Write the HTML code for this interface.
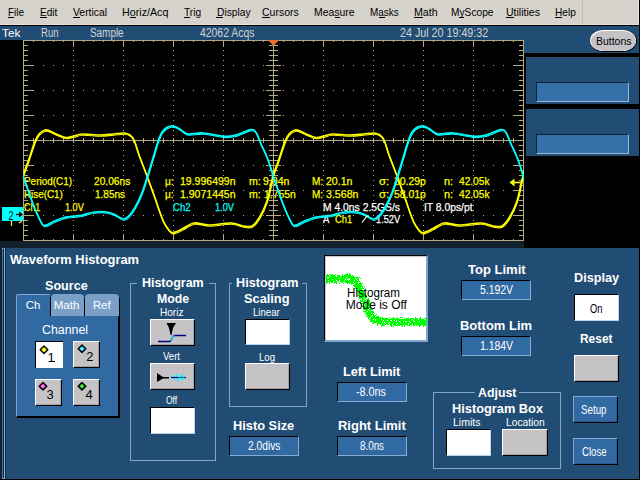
<!DOCTYPE html>
<html><head><meta charset="utf-8">
<style>
*{margin:0;padding:0;box-sizing:border-box}
html,body{width:640px;height:480px;overflow:hidden;background:#000}
body{position:relative;font-family:"Liberation Sans",sans-serif}
.a{position:absolute}
.t{position:absolute;white-space:nowrap;line-height:1;transform-origin:0 0;font-family:"Liberation Sans",sans-serif}
.btn{position:absolute;background:#c6c3c6;border-style:solid;border-width:1px;border-color:#fff #000 #000 #fff;box-shadow:inset -1px -1px 0 #a4a2a4}
.btnw{position:absolute;background:#fff;border-style:solid;border-width:1px;border-color:#000 #b8d0e8 #b8d0e8 #000}
.fld{position:absolute;background:#316aa3;border-style:solid;border-width:1px;border-color:#000 #86acd2 #86acd2 #000}
.grp{position:absolute;border:1px solid #7ea6cf}
.bbtn{position:absolute;background:#316aa3;border-style:solid;border-width:1px;border-color:#7ea6cf #000 #000 #7ea6cf;box-shadow:inset -1px -1px 0 #2a5a8c}
.ul{position:absolute;height:1px;background:#000}
</style></head><body>
<!-- menu bar -->
<div class="a" style="left:0;top:0;width:638px;height:24px;background:#d6d2cc"></div>
<div class="a" style="left:638px;top:0;width:1px;height:25px;background:#e6e2da"></div>
<div class="a" style="left:0;top:24px;width:638px;height:1px;background:#e6e2da"></div>
<div class="a" style="left:582px;top:0;width:1px;height:24px;background:#c0bcb6"></div>
<!-- status bar -->
<div class="a" style="left:0;top:26px;width:639px;height:14px;background:#214d74"></div>
<div class="a" style="left:524px;top:26px;width:115px;height:27px;background:#214d74"></div>
<!-- Buttons pill -->
<div class="a" style="left:590px;top:30px;width:47px;height:22px;border-radius:14px/11px;background:#000"></div>
<div class="a" style="left:590px;top:30px;width:46px;height:21px;border-radius:14px/11px;background:#fff"></div>
<div class="a" style="left:591px;top:31px;width:45px;height:20px;border-radius:13px/10px;background:#c6c3c6"></div>
<!-- right boxes -->
<div class="a" style="left:526px;top:57px;width:113px;height:47px;background:#214d74"></div>
<div class="fld" style="left:536px;top:82px;width:93px;height:20px;background:#3570a8;border-color:#10223a #9ab8d6 #9ab8d6 #10223a"></div>
<div class="a" style="left:526px;top:109px;width:113px;height:47px;background:#214d74"></div>
<div class="fld" style="left:536px;top:134px;width:93px;height:20px;background:#3570a8;border-color:#10223a #9ab8d6 #9ab8d6 #10223a"></div>
<!-- dark band -->
<div class="a" style="left:0;top:241px;width:524px;height:7px;background:#13202e"></div>
<!-- bottom panel -->
<div class="a" style="left:0;top:248px;width:2px;height:231px;background:#13202e"></div>
<div class="a" style="left:2px;top:248px;width:637px;height:231px;background:#214d74"></div>
<div class="a" style="left:2px;top:248px;width:3px;height:231px;background:#10203a;border-style:solid;border-width:1px 1px 1px 1px;border-color:#6a9cd0 #8cb0d8 #8cb0d8 #3c78c0"></div>
<div class="a" style="left:5px;top:248px;width:1px;height:231px;background:#14283c"></div>
<!-- scope svg -->
<svg class="a" style="left:0;top:0;z-index:5" width="640" height="480" viewBox="0 0 640 480">
<rect x="23.5" y="40.5" width="500" height="200" fill="none" stroke="#b4aa82" stroke-width="1"/>
<line x1="23" y1="140.5" x2="524" y2="140.5" stroke="#b4aa82"/>
<line x1="273.5" y1="40" x2="273.5" y2="241" stroke="#b4aa82"/>
<rect x="123" y="210" width="1" height="1" fill="#b4aa82"/>
<rect x="203" y="90" width="1" height="1" fill="#b4aa82"/>
<rect x="323" y="155" width="1" height="1" fill="#b4aa82"/>
<rect x="473" y="170" width="1" height="1" fill="#b4aa82"/>
<rect x="123" y="75" width="1" height="1" fill="#b4aa82"/>
<rect x="313" y="65" width="1" height="1" fill="#b4aa82"/>
<rect x="223" y="180" width="1" height="1" fill="#b4aa82"/>
<rect x="423" y="205" width="1" height="1" fill="#b4aa82"/>
<rect x="173" y="170" width="1" height="1" fill="#b4aa82"/>
<rect x="453" y="215" width="1" height="1" fill="#b4aa82"/>
<rect x="113" y="165" width="1" height="1" fill="#b4aa82"/>
<rect x="373" y="115" width="1" height="1" fill="#b4aa82"/>
<rect x="73" y="110" width="1" height="1" fill="#b4aa82"/>
<rect x="143" y="165" width="1" height="1" fill="#b4aa82"/>
<rect x="223" y="45" width="1" height="1" fill="#b4aa82"/>
<rect x="423" y="70" width="1" height="1" fill="#b4aa82"/>
<rect x="503" y="90" width="1" height="1" fill="#b4aa82"/>
<rect x="123" y="205" width="1" height="1" fill="#b4aa82"/>
<rect x="73" y="195" width="1" height="1" fill="#b4aa82"/>
<rect x="323" y="150" width="1" height="1" fill="#b4aa82"/>
<rect x="343" y="65" width="1" height="1" fill="#b4aa82"/>
<rect x="473" y="165" width="1" height="1" fill="#b4aa82"/>
<rect x="283" y="190" width="1" height="1" fill="#b4aa82"/>
<rect x="483" y="215" width="1" height="1" fill="#b4aa82"/>
<rect x="43" y="190" width="1" height="1" fill="#b4aa82"/>
<rect x="323" y="235" width="1" height="1" fill="#b4aa82"/>
<rect x="123" y="70" width="1" height="1" fill="#b4aa82"/>
<rect x="403" y="115" width="1" height="1" fill="#b4aa82"/>
<rect x="73" y="60" width="1" height="1" fill="#b4aa82"/>
<rect x="223" y="175" width="1" height="1" fill="#b4aa82"/>
<rect x="423" y="200" width="1" height="1" fill="#b4aa82"/>
<rect x="413" y="165" width="1" height="1" fill="#b4aa82"/>
<rect x="173" y="165" width="1" height="1" fill="#b4aa82"/>
<rect x="93" y="65" width="1" height="1" fill="#b4aa82"/>
<rect x="373" y="110" width="1" height="1" fill="#b4aa82"/>
<rect x="293" y="90" width="1" height="1" fill="#b4aa82"/>
<rect x="323" y="100" width="1" height="1" fill="#b4aa82"/>
<rect x="183" y="215" width="1" height="1" fill="#b4aa82"/>
<rect x="103" y="115" width="1" height="1" fill="#b4aa82"/>
<rect x="423" y="65" width="1" height="1" fill="#b4aa82"/>
<rect x="123" y="200" width="1" height="1" fill="#b4aa82"/>
<rect x="313" y="190" width="1" height="1" fill="#b4aa82"/>
<rect x="513" y="215" width="1" height="1" fill="#b4aa82"/>
<rect x="73" y="190" width="1" height="1" fill="#b4aa82"/>
<rect x="233" y="90" width="1" height="1" fill="#b4aa82"/>
<rect x="433" y="115" width="1" height="1" fill="#b4aa82"/>
<rect x="473" y="160" width="1" height="1" fill="#b4aa82"/>
<rect x="443" y="165" width="1" height="1" fill="#b4aa82"/>
<rect x="203" y="165" width="1" height="1" fill="#b4aa82"/>
<rect x="363" y="65" width="1" height="1" fill="#b4aa82"/>
<rect x="323" y="230" width="1" height="1" fill="#b4aa82"/>
<rect x="123" y="65" width="1" height="1" fill="#b4aa82"/>
<rect x="73" y="55" width="1" height="1" fill="#b4aa82"/>
<rect x="213" y="215" width="1" height="1" fill="#b4aa82"/>
<rect x="223" y="170" width="1" height="1" fill="#b4aa82"/>
<rect x="423" y="195" width="1" height="1" fill="#b4aa82"/>
<rect x="133" y="115" width="1" height="1" fill="#b4aa82"/>
<rect x="503" y="215" width="1" height="1" fill="#b4aa82"/>
<rect x="173" y="160" width="1" height="1" fill="#b4aa82"/>
<rect x="373" y="105" width="1" height="1" fill="#b4aa82"/>
<rect x="343" y="190" width="1" height="1" fill="#b4aa82"/>
<rect x="323" y="95" width="1" height="1" fill="#b4aa82"/>
<rect x="263" y="90" width="1" height="1" fill="#b4aa82"/>
<rect x="423" y="60" width="1" height="1" fill="#b4aa82"/>
<rect x="123" y="195" width="1" height="1" fill="#b4aa82"/>
<rect x="393" y="65" width="1" height="1" fill="#b4aa82"/>
<rect x="73" y="185" width="1" height="1" fill="#b4aa82"/>
<rect x="153" y="65" width="1" height="1" fill="#b4aa82"/>
<rect x="473" y="155" width="1" height="1" fill="#b4aa82"/>
<rect x="223" y="120" width="1" height="1" fill="#b4aa82"/>
<rect x="503" y="165" width="1" height="1" fill="#b4aa82"/>
<rect x="163" y="115" width="1" height="1" fill="#b4aa82"/>
<rect x="93" y="190" width="1" height="1" fill="#b4aa82"/>
<rect x="373" y="235" width="1" height="1" fill="#b4aa82"/>
<rect x="293" y="215" width="1" height="1" fill="#b4aa82"/>
<rect x="323" y="225" width="1" height="1" fill="#b4aa82"/>
<rect x="123" y="60" width="1" height="1" fill="#b4aa82"/>
<rect x="73" y="50" width="1" height="1" fill="#b4aa82"/>
<rect x="193" y="115" width="1" height="1" fill="#b4aa82"/>
<rect x="423" y="190" width="1" height="1" fill="#b4aa82"/>
<rect x="173" y="155" width="1" height="1" fill="#b4aa82"/>
<rect x="373" y="100" width="1" height="1" fill="#b4aa82"/>
<rect x="233" y="215" width="1" height="1" fill="#b4aa82"/>
<rect x="323" y="90" width="1" height="1" fill="#b4aa82"/>
<rect x="423" y="55" width="1" height="1" fill="#b4aa82"/>
<rect x="123" y="190" width="1" height="1" fill="#b4aa82"/>
<rect x="453" y="65" width="1" height="1" fill="#b4aa82"/>
<rect x="73" y="180" width="1" height="1" fill="#b4aa82"/>
<rect x="473" y="150" width="1" height="1" fill="#b4aa82"/>
<rect x="463" y="115" width="1" height="1" fill="#b4aa82"/>
<rect x="223" y="115" width="1" height="1" fill="#b4aa82"/>
<rect x="423" y="140" width="1" height="1" fill="#b4aa82"/>
<rect x="373" y="230" width="1" height="1" fill="#b4aa82"/>
<rect x="323" y="220" width="1" height="1" fill="#b4aa82"/>
<rect x="123" y="55" width="1" height="1" fill="#b4aa82"/>
<rect x="233" y="165" width="1" height="1" fill="#b4aa82"/>
<rect x="263" y="215" width="1" height="1" fill="#b4aa82"/>
<rect x="73" y="45" width="1" height="1" fill="#b4aa82"/>
<rect x="353" y="90" width="1" height="1" fill="#b4aa82"/>
<rect x="173" y="150" width="1" height="1" fill="#b4aa82"/>
<rect x="123" y="140" width="1" height="1" fill="#b4aa82"/>
<rect x="373" y="95" width="1" height="1" fill="#b4aa82"/>
<rect x="153" y="190" width="1" height="1" fill="#b4aa82"/>
<rect x="483" y="65" width="1" height="1" fill="#b4aa82"/>
<rect x="323" y="85" width="1" height="1" fill="#b4aa82"/>
<rect x="243" y="65" width="1" height="1" fill="#b4aa82"/>
<rect x="493" y="115" width="1" height="1" fill="#b4aa82"/>
<rect x="53" y="90" width="1" height="1" fill="#b4aa82"/>
<rect x="253" y="115" width="1" height="1" fill="#b4aa82"/>
<rect x="373" y="180" width="1" height="1" fill="#b4aa82"/>
<rect x="73" y="175" width="1" height="1" fill="#b4aa82"/>
<rect x="263" y="165" width="1" height="1" fill="#b4aa82"/>
<rect x="473" y="145" width="1" height="1" fill="#b4aa82"/>
<rect x="183" y="65" width="1" height="1" fill="#b4aa82"/>
<rect x="383" y="90" width="1" height="1" fill="#b4aa82"/>
<rect x="223" y="110" width="1" height="1" fill="#b4aa82"/>
<rect x="423" y="135" width="1" height="1" fill="#b4aa82"/>
<rect x="323" y="215" width="1" height="1" fill="#b4aa82"/>
<rect x="373" y="45" width="1" height="1" fill="#b4aa82"/>
<rect x="513" y="65" width="1" height="1" fill="#b4aa82"/>
<rect x="173" y="145" width="1" height="1" fill="#b4aa82"/>
<rect x="83" y="90" width="1" height="1" fill="#b4aa82"/>
<rect x="453" y="190" width="1" height="1" fill="#b4aa82"/>
<rect x="123" y="135" width="1" height="1" fill="#b4aa82"/>
<rect x="323" y="80" width="1" height="1" fill="#b4aa82"/>
<rect x="213" y="65" width="1" height="1" fill="#b4aa82"/>
<rect x="373" y="175" width="1" height="1" fill="#b4aa82"/>
<rect x="73" y="170" width="1" height="1" fill="#b4aa82"/>
<rect x="353" y="215" width="1" height="1" fill="#b4aa82"/>
<rect x="273" y="115" width="1" height="1" fill="#b4aa82"/>
<rect x="473" y="140" width="1" height="1" fill="#b4aa82"/>
<rect x="223" y="105" width="1" height="1" fill="#b4aa82"/>
<rect x="423" y="130" width="1" height="1" fill="#b4aa82"/>
<rect x="283" y="165" width="1" height="1" fill="#b4aa82"/>
<rect x="113" y="90" width="1" height="1" fill="#b4aa82"/>
<rect x="483" y="190" width="1" height="1" fill="#b4aa82"/>
<rect x="43" y="165" width="1" height="1" fill="#b4aa82"/>
<rect x="323" y="210" width="1" height="1" fill="#b4aa82"/>
<rect x="243" y="190" width="1" height="1" fill="#b4aa82"/>
<rect x="53" y="215" width="1" height="1" fill="#b4aa82"/>
<rect x="173" y="140" width="1" height="1" fill="#b4aa82"/>
<rect x="123" y="130" width="1" height="1" fill="#b4aa82"/>
<rect x="323" y="75" width="1" height="1" fill="#b4aa82"/>
<rect x="183" y="190" width="1" height="1" fill="#b4aa82"/>
<rect x="383" y="215" width="1" height="1" fill="#b4aa82"/>
<rect x="223" y="235" width="1" height="1" fill="#b4aa82"/>
<rect x="273" y="65" width="1" height="1" fill="#b4aa82"/>
<rect x="303" y="115" width="1" height="1" fill="#b4aa82"/>
<rect x="373" y="170" width="1" height="1" fill="#b4aa82"/>
<rect x="313" y="165" width="1" height="1" fill="#b4aa82"/>
<rect x="513" y="190" width="1" height="1" fill="#b4aa82"/>
<rect x="73" y="165" width="1" height="1" fill="#b4aa82"/>
<rect x="473" y="135" width="1" height="1" fill="#b4aa82"/>
<rect x="223" y="100" width="1" height="1" fill="#b4aa82"/>
<rect x="423" y="125" width="1" height="1" fill="#b4aa82"/>
<rect x="413" y="90" width="1" height="1" fill="#b4aa82"/>
<rect x="83" y="215" width="1" height="1" fill="#b4aa82"/>
<rect x="323" y="205" width="1" height="1" fill="#b4aa82"/>
<rect x="473" y="220" width="1" height="1" fill="#b4aa82"/>
<rect x="213" y="190" width="1" height="1" fill="#b4aa82"/>
<rect x="303" y="65" width="1" height="1" fill="#b4aa82"/>
<rect x="173" y="135" width="1" height="1" fill="#b4aa82"/>
<rect x="123" y="125" width="1" height="1" fill="#b4aa82"/>
<rect x="313" y="115" width="1" height="1" fill="#b4aa82"/>
<rect x="343" y="165" width="1" height="1" fill="#b4aa82"/>
<rect x="323" y="70" width="1" height="1" fill="#b4aa82"/>
<rect x="223" y="230" width="1" height="1" fill="#b4aa82"/>
<rect x="473" y="85" width="1" height="1" fill="#b4aa82"/>
<rect x="173" y="220" width="1" height="1" fill="#b4aa82"/>
<rect x="113" y="215" width="1" height="1" fill="#b4aa82"/>
<rect x="443" y="90" width="1" height="1" fill="#b4aa82"/>
<rect x="373" y="165" width="1" height="1" fill="#b4aa82"/>
<rect x="73" y="160" width="1" height="1" fill="#b4aa82"/>
<rect x="143" y="215" width="1" height="1" fill="#b4aa82"/>
<rect x="223" y="95" width="1" height="1" fill="#b4aa82"/>
<rect x="423" y="120" width="1" height="1" fill="#b4aa82"/>
<rect x="333" y="65" width="1" height="1" fill="#b4aa82"/>
<rect x="173" y="85" width="1" height="1" fill="#b4aa82"/>
<rect x="323" y="200" width="1" height="1" fill="#b4aa82"/>
<rect x="343" y="115" width="1" height="1" fill="#b4aa82"/>
<rect x="273" y="190" width="1" height="1" fill="#b4aa82"/>
<rect x="473" y="215" width="1" height="1" fill="#b4aa82"/>
<rect x="193" y="90" width="1" height="1" fill="#b4aa82"/>
<rect x="123" y="120" width="1" height="1" fill="#b4aa82"/>
<rect x="33" y="65" width="1" height="1" fill="#b4aa82"/>
<rect x="403" y="165" width="1" height="1" fill="#b4aa82"/>
<rect x="323" y="65" width="1" height="1" fill="#b4aa82"/>
<rect x="223" y="225" width="1" height="1" fill="#b4aa82"/>
<rect x="473" y="80" width="1" height="1" fill="#b4aa82"/>
<rect x="413" y="215" width="1" height="1" fill="#b4aa82"/>
<rect x="173" y="215" width="1" height="1" fill="#b4aa82"/>
<rect x="93" y="115" width="1" height="1" fill="#b4aa82"/>
<rect x="373" y="160" width="1" height="1" fill="#b4aa82"/>
<rect x="73" y="155" width="1" height="1" fill="#b4aa82"/>
<rect x="103" y="165" width="1" height="1" fill="#b4aa82"/>
<rect x="303" y="190" width="1" height="1" fill="#b4aa82"/>
<rect x="463" y="90" width="1" height="1" fill="#b4aa82"/>
<rect x="223" y="90" width="1" height="1" fill="#b4aa82"/>
<rect x="423" y="115" width="1" height="1" fill="#b4aa82"/>
<rect x="173" y="80" width="1" height="1" fill="#b4aa82"/>
<rect x="323" y="195" width="1" height="1" fill="#b4aa82"/>
<rect x="63" y="65" width="1" height="1" fill="#b4aa82"/>
<rect x="433" y="165" width="1" height="1" fill="#b4aa82"/>
<rect x="473" y="210" width="1" height="1" fill="#b4aa82"/>
<rect x="353" y="65" width="1" height="1" fill="#b4aa82"/>
<rect x="443" y="215" width="1" height="1" fill="#b4aa82"/>
<rect x="203" y="215" width="1" height="1" fill="#b4aa82"/>
<rect x="363" y="115" width="1" height="1" fill="#b4aa82"/>
<rect x="123" y="115" width="1" height="1" fill="#b4aa82"/>
<rect x="73" y="105" width="1" height="1" fill="#b4aa82"/>
<rect x="323" y="60" width="1" height="1" fill="#b4aa82"/>
<rect x="223" y="220" width="1" height="1" fill="#b4aa82"/>
<rect x="133" y="165" width="1" height="1" fill="#b4aa82"/>
<rect x="473" y="75" width="1" height="1" fill="#b4aa82"/>
<rect x="333" y="190" width="1" height="1" fill="#b4aa82"/>
<rect x="493" y="90" width="1" height="1" fill="#b4aa82"/>
<rect x="173" y="210" width="1" height="1" fill="#b4aa82"/>
<rect x="53" y="65" width="1" height="1" fill="#b4aa82"/>
<rect x="253" y="90" width="1" height="1" fill="#b4aa82"/>
<rect x="373" y="155" width="1" height="1" fill="#b4aa82"/>
<rect x="323" y="145" width="1" height="1" fill="#b4aa82"/>
<rect x="193" y="215" width="1" height="1" fill="#b4aa82"/>
<rect x="383" y="65" width="1" height="1" fill="#b4aa82"/>
<rect x="223" y="85" width="1" height="1" fill="#b4aa82"/>
<rect x="423" y="110" width="1" height="1" fill="#b4aa82"/>
<rect x="173" y="75" width="1" height="1" fill="#b4aa82"/>
<rect x="33" y="190" width="1" height="1" fill="#b4aa82"/>
<rect x="393" y="115" width="1" height="1" fill="#b4aa82"/>
<rect x="73" y="235" width="1" height="1" fill="#b4aa82"/>
<rect x="153" y="115" width="1" height="1" fill="#b4aa82"/>
<rect x="473" y="205" width="1" height="1" fill="#b4aa82"/>
<rect x="163" y="165" width="1" height="1" fill="#b4aa82"/>
<rect x="83" y="65" width="1" height="1" fill="#b4aa82"/>
<rect x="123" y="110" width="1" height="1" fill="#b4aa82"/>
<rect x="73" y="100" width="1" height="1" fill="#b4aa82"/>
<rect x="193" y="165" width="1" height="1" fill="#b4aa82"/>
<rect x="223" y="215" width="1" height="1" fill="#b4aa82"/>
<rect x="473" y="70" width="1" height="1" fill="#b4aa82"/>
<rect x="83" y="165" width="1" height="1" fill="#b4aa82"/>
<rect x="173" y="205" width="1" height="1" fill="#b4aa82"/>
<rect x="373" y="150" width="1" height="1" fill="#b4aa82"/>
<rect x="63" y="190" width="1" height="1" fill="#b4aa82"/>
<rect x="323" y="140" width="1" height="1" fill="#b4aa82"/>
<rect x="223" y="80" width="1" height="1" fill="#b4aa82"/>
<rect x="423" y="105" width="1" height="1" fill="#b4aa82"/>
<rect x="173" y="70" width="1" height="1" fill="#b4aa82"/>
<rect x="453" y="115" width="1" height="1" fill="#b4aa82"/>
<rect x="113" y="65" width="1" height="1" fill="#b4aa82"/>
<rect x="73" y="230" width="1" height="1" fill="#b4aa82"/>
<rect x="473" y="200" width="1" height="1" fill="#b4aa82"/>
<rect x="463" y="165" width="1" height="1" fill="#b4aa82"/>
<rect x="223" y="165" width="1" height="1" fill="#b4aa82"/>
<rect x="253" y="215" width="1" height="1" fill="#b4aa82"/>
<rect x="143" y="65" width="1" height="1" fill="#b4aa82"/>
<rect x="123" y="105" width="1" height="1" fill="#b4aa82"/>
<rect x="73" y="95" width="1" height="1" fill="#b4aa82"/>
<rect x="423" y="235" width="1" height="1" fill="#b4aa82"/>
<rect x="473" y="65" width="1" height="1" fill="#b4aa82"/>
<rect x="173" y="200" width="1" height="1" fill="#b4aa82"/>
<rect x="363" y="190" width="1" height="1" fill="#b4aa82"/>
<rect x="373" y="145" width="1" height="1" fill="#b4aa82"/>
<rect x="283" y="90" width="1" height="1" fill="#b4aa82"/>
<rect x="483" y="115" width="1" height="1" fill="#b4aa82"/>
<rect x="43" y="90" width="1" height="1" fill="#b4aa82"/>
<rect x="323" y="135" width="1" height="1" fill="#b4aa82"/>
<rect x="243" y="115" width="1" height="1" fill="#b4aa82"/>
<rect x="493" y="165" width="1" height="1" fill="#b4aa82"/>
<rect x="253" y="165" width="1" height="1" fill="#b4aa82"/>
<rect x="423" y="100" width="1" height="1" fill="#b4aa82"/>
<rect x="413" y="65" width="1" height="1" fill="#b4aa82"/>
<rect x="123" y="235" width="1" height="1" fill="#b4aa82"/>
<rect x="173" y="65" width="1" height="1" fill="#b4aa82"/>
<rect x="73" y="225" width="1" height="1" fill="#b4aa82"/>
<rect x="473" y="195" width="1" height="1" fill="#b4aa82"/>
<rect x="183" y="115" width="1" height="1" fill="#b4aa82"/>
<rect x="223" y="160" width="1" height="1" fill="#b4aa82"/>
<rect x="423" y="185" width="1" height="1" fill="#b4aa82"/>
<rect x="393" y="190" width="1" height="1" fill="#b4aa82"/>
<rect x="123" y="100" width="1" height="1" fill="#b4aa82"/>
<rect x="313" y="90" width="1" height="1" fill="#b4aa82"/>
<rect x="513" y="115" width="1" height="1" fill="#b4aa82"/>
<rect x="73" y="90" width="1" height="1" fill="#b4aa82"/>
<rect x="473" y="60" width="1" height="1" fill="#b4aa82"/>
<rect x="173" y="195" width="1" height="1" fill="#b4aa82"/>
<rect x="423" y="50" width="1" height="1" fill="#b4aa82"/>
<rect x="443" y="65" width="1" height="1" fill="#b4aa82"/>
<rect x="123" y="185" width="1" height="1" fill="#b4aa82"/>
<rect x="373" y="140" width="1" height="1" fill="#b4aa82"/>
<rect x="203" y="65" width="1" height="1" fill="#b4aa82"/>
<rect x="323" y="130" width="1" height="1" fill="#b4aa82"/>
<rect x="213" y="115" width="1" height="1" fill="#b4aa82"/>
<rect x="143" y="190" width="1" height="1" fill="#b4aa82"/>
<rect x="373" y="225" width="1" height="1" fill="#b4aa82"/>
<rect x="173" y="60" width="1" height="1" fill="#b4aa82"/>
<rect x="73" y="220" width="1" height="1" fill="#b4aa82"/>
<rect x="123" y="50" width="1" height="1" fill="#b4aa82"/>
<rect x="343" y="90" width="1" height="1" fill="#b4aa82"/>
<rect x="273" y="165" width="1" height="1" fill="#b4aa82"/>
<rect x="473" y="190" width="1" height="1" fill="#b4aa82"/>
<rect x="223" y="155" width="1" height="1" fill="#b4aa82"/>
<rect x="423" y="180" width="1" height="1" fill="#b4aa82"/>
<rect x="283" y="215" width="1" height="1" fill="#b4aa82"/>
<rect x="43" y="215" width="1" height="1" fill="#b4aa82"/>
<rect x="373" y="90" width="1" height="1" fill="#b4aa82"/>
<rect x="73" y="85" width="1" height="1" fill="#b4aa82"/>
<rect x="473" y="55" width="1" height="1" fill="#b4aa82"/>
<rect x="413" y="190" width="1" height="1" fill="#b4aa82"/>
<rect x="173" y="190" width="1" height="1" fill="#b4aa82"/>
<rect x="423" y="45" width="1" height="1" fill="#b4aa82"/>
<rect x="503" y="65" width="1" height="1" fill="#b4aa82"/>
<rect x="123" y="180" width="1" height="1" fill="#b4aa82"/>
<rect x="293" y="115" width="1" height="1" fill="#b4aa82"/>
<rect x="323" y="125" width="1" height="1" fill="#b4aa82"/>
<rect x="303" y="165" width="1" height="1" fill="#b4aa82"/>
<rect x="373" y="220" width="1" height="1" fill="#b4aa82"/>
<rect x="173" y="55" width="1" height="1" fill="#b4aa82"/>
<rect x="313" y="215" width="1" height="1" fill="#b4aa82"/>
<rect x="73" y="215" width="1" height="1" fill="#b4aa82"/>
<rect x="123" y="45" width="1" height="1" fill="#b4aa82"/>
<rect x="403" y="90" width="1" height="1" fill="#b4aa82"/>
<rect x="473" y="185" width="1" height="1" fill="#b4aa82"/>
<rect x="223" y="150" width="1" height="1" fill="#b4aa82"/>
<rect x="423" y="175" width="1" height="1" fill="#b4aa82"/>
<rect x="443" y="190" width="1" height="1" fill="#b4aa82"/>
<rect x="203" y="190" width="1" height="1" fill="#b4aa82"/>
<rect x="373" y="85" width="1" height="1" fill="#b4aa82"/>
<rect x="293" y="65" width="1" height="1" fill="#b4aa82"/>
<rect x="73" y="80" width="1" height="1" fill="#b4aa82"/>
<rect x="103" y="90" width="1" height="1" fill="#b4aa82"/>
<rect x="473" y="50" width="1" height="1" fill="#b4aa82"/>
<rect x="333" y="165" width="1" height="1" fill="#b4aa82"/>
<rect x="173" y="185" width="1" height="1" fill="#b4aa82"/>
<rect x="123" y="175" width="1" height="1" fill="#b4aa82"/>
<rect x="343" y="215" width="1" height="1" fill="#b4aa82"/>
<rect x="323" y="120" width="1" height="1" fill="#b4aa82"/>
<rect x="233" y="65" width="1" height="1" fill="#b4aa82"/>
<rect x="433" y="90" width="1" height="1" fill="#b4aa82"/>
<rect x="373" y="215" width="1" height="1" fill="#b4aa82"/>
<rect x="173" y="50" width="1" height="1" fill="#b4aa82"/>
<rect x="33" y="165" width="1" height="1" fill="#b4aa82"/>
<rect x="73" y="210" width="1" height="1" fill="#b4aa82"/>
<rect x="473" y="180" width="1" height="1" fill="#b4aa82"/>
<rect x="223" y="145" width="1" height="1" fill="#b4aa82"/>
<rect x="423" y="170" width="1" height="1" fill="#b4aa82"/>
<rect x="133" y="90" width="1" height="1" fill="#b4aa82"/>
<rect x="333" y="115" width="1" height="1" fill="#b4aa82"/>
<rect x="503" y="190" width="1" height="1" fill="#b4aa82"/>
<rect x="373" y="80" width="1" height="1" fill="#b4aa82"/>
<rect x="73" y="75" width="1" height="1" fill="#b4aa82"/>
<rect x="263" y="65" width="1" height="1" fill="#b4aa82"/>
<rect x="473" y="45" width="1" height="1" fill="#b4aa82"/>
<rect x="173" y="180" width="1" height="1" fill="#b4aa82"/>
<rect x="123" y="170" width="1" height="1" fill="#b4aa82"/>
<rect x="33" y="115" width="1" height="1" fill="#b4aa82"/>
<rect x="63" y="165" width="1" height="1" fill="#b4aa82"/>
<rect x="403" y="215" width="1" height="1" fill="#b4aa82"/>
<rect x="323" y="115" width="1" height="1" fill="#b4aa82"/>
<rect x="473" y="130" width="1" height="1" fill="#b4aa82"/>
<rect x="163" y="90" width="1" height="1" fill="#b4aa82"/>
<rect x="93" y="165" width="1" height="1" fill="#b4aa82"/>
<rect x="373" y="210" width="1" height="1" fill="#b4aa82"/>
<rect x="173" y="45" width="1" height="1" fill="#b4aa82"/>
<rect x="453" y="90" width="1" height="1" fill="#b4aa82"/>
<rect x="293" y="190" width="1" height="1" fill="#b4aa82"/>
<rect x="73" y="205" width="1" height="1" fill="#b4aa82"/>
<rect x="103" y="215" width="1" height="1" fill="#b4aa82"/>
<rect x="223" y="140" width="1" height="1" fill="#b4aa82"/>
<rect x="423" y="165" width="1" height="1" fill="#b4aa82"/>
<rect x="173" y="130" width="1" height="1" fill="#b4aa82"/>
<rect x="373" y="75" width="1" height="1" fill="#b4aa82"/>
<rect x="63" y="115" width="1" height="1" fill="#b4aa82"/>
<rect x="233" y="190" width="1" height="1" fill="#b4aa82"/>
<rect x="433" y="215" width="1" height="1" fill="#b4aa82"/>
<rect x="73" y="70" width="1" height="1" fill="#b4aa82"/>
<rect x="353" y="115" width="1" height="1" fill="#b4aa82"/>
<rect x="363" y="165" width="1" height="1" fill="#b4aa82"/>
<rect x="123" y="165" width="1" height="1" fill="#b4aa82"/>
<rect x="483" y="90" width="1" height="1" fill="#b4aa82"/>
<rect x="43" y="65" width="1" height="1" fill="#b4aa82"/>
<rect x="323" y="110" width="1" height="1" fill="#b4aa82"/>
<rect x="243" y="90" width="1" height="1" fill="#b4aa82"/>
<rect x="133" y="215" width="1" height="1" fill="#b4aa82"/>
<rect x="473" y="125" width="1" height="1" fill="#b4aa82"/>
<rect x="53" y="115" width="1" height="1" fill="#b4aa82"/>
<rect x="373" y="205" width="1" height="1" fill="#b4aa82"/>
<rect x="73" y="200" width="1" height="1" fill="#b4aa82"/>
<rect x="263" y="190" width="1" height="1" fill="#b4aa82"/>
<rect x="183" y="90" width="1" height="1" fill="#b4aa82"/>
<rect x="383" y="115" width="1" height="1" fill="#b4aa82"/>
<rect x="223" y="135" width="1" height="1" fill="#b4aa82"/>
<rect x="423" y="160" width="1" height="1" fill="#b4aa82"/>
<rect x="173" y="125" width="1" height="1" fill="#b4aa82"/>
<rect x="393" y="165" width="1" height="1" fill="#b4aa82"/>
<rect x="373" y="70" width="1" height="1" fill="#b4aa82"/>
<rect x="153" y="165" width="1" height="1" fill="#b4aa82"/>
<rect x="513" y="90" width="1" height="1" fill="#b4aa82"/>
<rect x="73" y="65" width="1" height="1" fill="#b4aa82"/>
<rect x="163" y="215" width="1" height="1" fill="#b4aa82"/>
<rect x="83" y="115" width="1" height="1" fill="#b4aa82"/>
<rect x="123" y="160" width="1" height="1" fill="#b4aa82"/>
<rect x="73" y="150" width="1" height="1" fill="#b4aa82"/>
<rect x="323" y="105" width="1" height="1" fill="#b4aa82"/>
<rect x="473" y="120" width="1" height="1" fill="#b4aa82"/>
<rect x="213" y="90" width="1" height="1" fill="#b4aa82"/>
<rect x="373" y="200" width="1" height="1" fill="#b4aa82"/>
<rect x="323" y="190" width="1" height="1" fill="#b4aa82"/>
<rect x="223" y="130" width="1" height="1" fill="#b4aa82"/>
<rect x="423" y="155" width="1" height="1" fill="#b4aa82"/>
<rect x="173" y="120" width="1" height="1" fill="#b4aa82"/>
<rect x="453" y="165" width="1" height="1" fill="#b4aa82"/>
<rect x="113" y="115" width="1" height="1" fill="#b4aa82"/>
<rect x="243" y="215" width="1" height="1" fill="#b4aa82"/>
<rect x="373" y="65" width="1" height="1" fill="#b4aa82"/>
<rect x="323" y="55" width="1" height="1" fill="#b4aa82"/>
<rect x="463" y="215" width="1" height="1" fill="#b4aa82"/>
<rect x="143" y="115" width="1" height="1" fill="#b4aa82"/>
<rect x="123" y="155" width="1" height="1" fill="#b4aa82"/>
<rect x="73" y="145" width="1" height="1" fill="#b4aa82"/>
<rect x="353" y="190" width="1" height="1" fill="#b4aa82"/>
<rect x="273" y="90" width="1" height="1" fill="#b4aa82"/>
<rect x="473" y="115" width="1" height="1" fill="#b4aa82"/>
<rect x="373" y="195" width="1" height="1" fill="#b4aa82"/>
<rect x="483" y="165" width="1" height="1" fill="#b4aa82"/>
<rect x="323" y="185" width="1" height="1" fill="#b4aa82"/>
<rect x="243" y="165" width="1" height="1" fill="#b4aa82"/>
<rect x="403" y="65" width="1" height="1" fill="#b4aa82"/>
<rect x="493" y="215" width="1" height="1" fill="#b4aa82"/>
<rect x="53" y="190" width="1" height="1" fill="#b4aa82"/>
<rect x="223" y="125" width="1" height="1" fill="#b4aa82"/>
<rect x="423" y="150" width="1" height="1" fill="#b4aa82"/>
<rect x="413" y="115" width="1" height="1" fill="#b4aa82"/>
<rect x="173" y="115" width="1" height="1" fill="#b4aa82"/>
<rect x="373" y="60" width="1" height="1" fill="#b4aa82"/>
<rect x="323" y="50" width="1" height="1" fill="#b4aa82"/>
<rect x="183" y="165" width="1" height="1" fill="#b4aa82"/>
<rect x="383" y="190" width="1" height="1" fill="#b4aa82"/>
<rect x="223" y="210" width="1" height="1" fill="#b4aa82"/>
<rect x="103" y="65" width="1" height="1" fill="#b4aa82"/>
<rect x="303" y="90" width="1" height="1" fill="#b4aa82"/>
<rect x="123" y="150" width="1" height="1" fill="#b4aa82"/>
<rect x="513" y="165" width="1" height="1" fill="#b4aa82"/>
<rect x="73" y="140" width="1" height="1" fill="#b4aa82"/>
<rect x="433" y="65" width="1" height="1" fill="#b4aa82"/>
<rect x="473" y="110" width="1" height="1" fill="#b4aa82"/>
<rect x="223" y="75" width="1" height="1" fill="#b4aa82"/>
<rect x="83" y="190" width="1" height="1" fill="#b4aa82"/>
<rect x="443" y="115" width="1" height="1" fill="#b4aa82"/>
<rect x="373" y="190" width="1" height="1" fill="#b4aa82"/>
<rect x="203" y="115" width="1" height="1" fill="#b4aa82"/>
<rect x="323" y="180" width="1" height="1" fill="#b4aa82"/>
<rect x="213" y="165" width="1" height="1" fill="#b4aa82"/>
<rect x="423" y="145" width="1" height="1" fill="#b4aa82"/>
<rect x="133" y="65" width="1" height="1" fill="#b4aa82"/>
<rect x="333" y="90" width="1" height="1" fill="#b4aa82"/>
<rect x="173" y="110" width="1" height="1" fill="#b4aa82"/>
<rect x="373" y="55" width="1" height="1" fill="#b4aa82"/>
<rect x="273" y="215" width="1" height="1" fill="#b4aa82"/>
<rect x="323" y="45" width="1" height="1" fill="#b4aa82"/>
<rect x="223" y="205" width="1" height="1" fill="#b4aa82"/>
<rect x="423" y="230" width="1" height="1" fill="#b4aa82"/>
<rect x="113" y="190" width="1" height="1" fill="#b4aa82"/>
<rect x="123" y="145" width="1" height="1" fill="#b4aa82"/>
<rect x="33" y="90" width="1" height="1" fill="#b4aa82"/>
<rect x="403" y="190" width="1" height="1" fill="#b4aa82"/>
<rect x="73" y="135" width="1" height="1" fill="#b4aa82"/>
<rect x="473" y="105" width="1" height="1" fill="#b4aa82"/>
<rect x="223" y="70" width="1" height="1" fill="#b4aa82"/>
<rect x="423" y="95" width="1" height="1" fill="#b4aa82"/>
<rect x="163" y="65" width="1" height="1" fill="#b4aa82"/>
<rect x="503" y="115" width="1" height="1" fill="#b4aa82"/>
<rect x="123" y="230" width="1" height="1" fill="#b4aa82"/>
<rect x="373" y="185" width="1" height="1" fill="#b4aa82"/>
<rect x="293" y="165" width="1" height="1" fill="#b4aa82"/>
<rect x="323" y="175" width="1" height="1" fill="#b4aa82"/>
<rect x="103" y="190" width="1" height="1" fill="#b4aa82"/>
<rect x="303" y="215" width="1" height="1" fill="#b4aa82"/>
<rect x="193" y="65" width="1" height="1" fill="#b4aa82"/>
<rect x="173" y="105" width="1" height="1" fill="#b4aa82"/>
<rect x="123" y="95" width="1" height="1" fill="#b4aa82"/>
<rect x="373" y="50" width="1" height="1" fill="#b4aa82"/>
<rect x="63" y="90" width="1" height="1" fill="#b4aa82"/>
<rect x="433" y="190" width="1" height="1" fill="#b4aa82"/>
<rect x="473" y="235" width="1" height="1" fill="#b4aa82"/>
<rect x="223" y="200" width="1" height="1" fill="#b4aa82"/>
<rect x="423" y="225" width="1" height="1" fill="#b4aa82"/>
<rect x="93" y="90" width="1" height="1" fill="#b4aa82"/>
<rect x="373" y="135" width="1" height="1" fill="#b4aa82"/>
<rect x="73" y="130" width="1" height="1" fill="#b4aa82"/>
<rect x="133" y="190" width="1" height="1" fill="#b4aa82"/>
<rect x="473" y="100" width="1" height="1" fill="#b4aa82"/>
<rect x="463" y="65" width="1" height="1" fill="#b4aa82"/>
<rect x="333" y="215" width="1" height="1" fill="#b4aa82"/>
<rect x="173" y="235" width="1" height="1" fill="#b4aa82"/>
<rect x="223" y="65" width="1" height="1" fill="#b4aa82"/>
<rect x="423" y="90" width="1" height="1" fill="#b4aa82"/>
<rect x="123" y="225" width="1" height="1" fill="#b4aa82"/>
<rect x="323" y="170" width="1" height="1" fill="#b4aa82"/>
<rect x="233" y="115" width="1" height="1" fill="#b4aa82"/>
<rect x="173" y="100" width="1" height="1" fill="#b4aa82"/>
<rect x="33" y="215" width="1" height="1" fill="#b4aa82"/>
<rect x="363" y="90" width="1" height="1" fill="#b4aa82"/>
<rect x="123" y="90" width="1" height="1" fill="#b4aa82"/>
<rect x="473" y="230" width="1" height="1" fill="#b4aa82"/>
<rect x="223" y="195" width="1" height="1" fill="#b4aa82"/>
<rect x="423" y="220" width="1" height="1" fill="#b4aa82"/>
<rect x="163" y="190" width="1" height="1" fill="#b4aa82"/>
<rect x="493" y="65" width="1" height="1" fill="#b4aa82"/>
<rect x="253" y="65" width="1" height="1" fill="#b4aa82"/>
<rect x="373" y="130" width="1" height="1" fill="#b4aa82"/>
<rect x="73" y="125" width="1" height="1" fill="#b4aa82"/>
<rect x="263" y="115" width="1" height="1" fill="#b4aa82"/>
<rect x="193" y="190" width="1" height="1" fill="#b4aa82"/>
<rect x="473" y="95" width="1" height="1" fill="#b4aa82"/>
<rect x="173" y="230" width="1" height="1" fill="#b4aa82"/>
<rect x="223" y="60" width="1" height="1" fill="#b4aa82"/>
<rect x="423" y="85" width="1" height="1" fill="#b4aa82"/>
<rect x="123" y="220" width="1" height="1" fill="#b4aa82"/>
<rect x="63" y="215" width="1" height="1" fill="#b4aa82"/>
<rect x="393" y="90" width="1" height="1" fill="#b4aa82"/>
<rect x="323" y="165" width="1" height="1" fill="#b4aa82"/>
<rect x="153" y="90" width="1" height="1" fill="#b4aa82"/>
<rect x="93" y="215" width="1" height="1" fill="#b4aa82"/>
<rect x="173" y="95" width="1" height="1" fill="#b4aa82"/>
<rect x="123" y="85" width="1" height="1" fill="#b4aa82"/>
<rect x="473" y="225" width="1" height="1" fill="#b4aa82"/>
<rect x="463" y="190" width="1" height="1" fill="#b4aa82"/>
<rect x="223" y="190" width="1" height="1" fill="#b4aa82"/>
<rect x="423" y="215" width="1" height="1" fill="#b4aa82"/>
<rect x="143" y="90" width="1" height="1" fill="#b4aa82"/>
<rect x="373" y="125" width="1" height="1" fill="#b4aa82"/>
<rect x="73" y="120" width="1" height="1" fill="#b4aa82"/>
<rect x="353" y="165" width="1" height="1" fill="#b4aa82"/>
<rect x="473" y="90" width="1" height="1" fill="#b4aa82"/>
<rect x="173" y="225" width="1" height="1" fill="#b4aa82"/>
<rect x="223" y="55" width="1" height="1" fill="#b4aa82"/>
<rect x="423" y="80" width="1" height="1" fill="#b4aa82"/>
<rect x="363" y="215" width="1" height="1" fill="#b4aa82"/>
<rect x="123" y="215" width="1" height="1" fill="#b4aa82"/>
<rect x="283" y="115" width="1" height="1" fill="#b4aa82"/>
<rect x="43" y="115" width="1" height="1" fill="#b4aa82"/>
<rect x="323" y="160" width="1" height="1" fill="#b4aa82"/>
<rect x="473" y="175" width="1" height="1" fill="#b4aa82"/>
<rect x="493" y="190" width="1" height="1" fill="#b4aa82"/>
<rect x="53" y="165" width="1" height="1" fill="#b4aa82"/>
<rect x="253" y="190" width="1" height="1" fill="#b4aa82"/>
<rect x="173" y="90" width="1" height="1" fill="#b4aa82"/>
<rect x="123" y="80" width="1" height="1" fill="#b4aa82"/>
<rect x="383" y="165" width="1" height="1" fill="#b4aa82"/>
<rect x="223" y="185" width="1" height="1" fill="#b4aa82"/>
<rect x="423" y="210" width="1" height="1" fill="#b4aa82"/>
<rect x="173" y="175" width="1" height="1" fill="#b4aa82"/>
<rect x="393" y="215" width="1" height="1" fill="#b4aa82"/>
<rect x="373" y="120" width="1" height="1" fill="#b4aa82"/>
<rect x="283" y="65" width="1" height="1" fill="#b4aa82"/>
<rect x="153" y="215" width="1" height="1" fill="#b4aa82"/>
<rect x="73" y="115" width="1" height="1" fill="#b4aa82"/>
<rect x="223" y="50" width="1" height="1" fill="#b4aa82"/>
<rect x="423" y="75" width="1" height="1" fill="#b4aa82"/>
<path d="M23 45.5h5 M523 45.5h-4 M269 45.5h9 M23 50.5h5 M523 50.5h-4 M269 50.5h9 M23 55.5h5 M523 55.5h-4 M269 55.5h9 M23 60.5h5 M523 60.5h-4 M269 60.5h9 M23 65.5h11 M523 65.5h-10 M266 65.5h15 M23 70.5h5 M523 70.5h-4 M269 70.5h9 M23 75.5h5 M523 75.5h-4 M269 75.5h9 M23 80.5h5 M523 80.5h-4 M269 80.5h9 M23 85.5h5 M523 85.5h-4 M269 85.5h9 M23 90.5h11 M523 90.5h-10 M266 90.5h15 M23 95.5h5 M523 95.5h-4 M269 95.5h9 M23 100.5h5 M523 100.5h-4 M269 100.5h9 M23 105.5h5 M523 105.5h-4 M269 105.5h9 M23 110.5h5 M523 110.5h-4 M269 110.5h9 M23 115.5h11 M523 115.5h-10 M266 115.5h15 M23 120.5h5 M523 120.5h-4 M269 120.5h9 M23 125.5h5 M523 125.5h-4 M269 125.5h9 M23 130.5h5 M523 130.5h-4 M269 130.5h9 M23 135.5h5 M523 135.5h-4 M269 135.5h9 M23 140.5h11 M523 140.5h-10 M23 145.5h5 M523 145.5h-4 M269 145.5h9 M23 150.5h5 M523 150.5h-4 M269 150.5h9 M23 155.5h5 M523 155.5h-4 M269 155.5h9 M23 160.5h5 M523 160.5h-4 M269 160.5h9 M23 165.5h11 M523 165.5h-10 M266 165.5h15 M23 170.5h5 M523 170.5h-4 M269 170.5h9 M23 175.5h5 M523 175.5h-4 M269 175.5h9 M23 180.5h5 M523 180.5h-4 M269 180.5h9 M23 185.5h5 M523 185.5h-4 M269 185.5h9 M23 190.5h11 M523 190.5h-10 M266 190.5h15 M23 195.5h5 M523 195.5h-4 M269 195.5h9 M23 200.5h5 M523 200.5h-4 M269 200.5h9 M23 205.5h5 M523 205.5h-4 M269 205.5h9 M23 210.5h5 M523 210.5h-4 M269 210.5h9 M23 215.5h11 M523 215.5h-10 M266 215.5h15 M23 220.5h5 M523 220.5h-4 M269 220.5h9 M23 225.5h5 M523 225.5h-4 M269 225.5h9 M23 230.5h5 M523 230.5h-4 M269 230.5h9 M23 235.5h5 M523 235.5h-4 M269 235.5h9 M33.5 41v1 M33.5 240v-1 M33.5 138v5 M43.5 41v1 M43.5 240v-1 M43.5 138v5 M53.5 41v1 M53.5 240v-1 M53.5 138v5 M63.5 41v1 M63.5 240v-1 M63.5 138v5 M73.5 41v6 M73.5 240v-6 M73.5 138v5 M83.5 41v1 M83.5 240v-1 M83.5 138v5 M93.5 41v1 M93.5 240v-1 M93.5 138v5 M103.5 41v1 M103.5 240v-1 M103.5 138v5 M113.5 41v1 M113.5 240v-1 M113.5 138v5 M123.5 41v6 M123.5 240v-6 M123.5 138v5 M133.5 41v1 M133.5 240v-1 M133.5 138v5 M143.5 41v1 M143.5 240v-1 M143.5 138v5 M153.5 41v1 M153.5 240v-1 M153.5 138v5 M163.5 41v1 M163.5 240v-1 M163.5 138v5 M173.5 41v6 M173.5 240v-6 M173.5 138v5 M183.5 41v1 M183.5 240v-1 M183.5 138v5 M193.5 41v1 M193.5 240v-1 M193.5 138v5 M203.5 41v1 M203.5 240v-1 M203.5 138v5 M213.5 41v1 M213.5 240v-1 M213.5 138v5 M223.5 41v6 M223.5 240v-6 M223.5 138v5 M233.5 41v1 M233.5 240v-1 M233.5 138v5 M243.5 41v1 M243.5 240v-1 M243.5 138v5 M253.5 41v1 M253.5 240v-1 M253.5 138v5 M263.5 41v1 M263.5 240v-1 M263.5 138v5 M273.5 41v6 M273.5 240v-6 M283.5 41v1 M283.5 240v-1 M283.5 138v5 M293.5 41v1 M293.5 240v-1 M293.5 138v5 M303.5 41v1 M303.5 240v-1 M303.5 138v5 M313.5 41v1 M313.5 240v-1 M313.5 138v5 M323.5 41v6 M323.5 240v-6 M323.5 138v5 M333.5 41v1 M333.5 240v-1 M333.5 138v5 M343.5 41v1 M343.5 240v-1 M343.5 138v5 M353.5 41v1 M353.5 240v-1 M353.5 138v5 M363.5 41v1 M363.5 240v-1 M363.5 138v5 M373.5 41v6 M373.5 240v-6 M373.5 138v5 M383.5 41v1 M383.5 240v-1 M383.5 138v5 M393.5 41v1 M393.5 240v-1 M393.5 138v5 M403.5 41v1 M403.5 240v-1 M403.5 138v5 M413.5 41v1 M413.5 240v-1 M413.5 138v5 M423.5 41v6 M423.5 240v-6 M423.5 138v5 M433.5 41v1 M433.5 240v-1 M433.5 138v5 M443.5 41v1 M443.5 240v-1 M443.5 138v5 M453.5 41v1 M453.5 240v-1 M453.5 138v5 M463.5 41v1 M463.5 240v-1 M463.5 138v5 M473.5 41v6 M473.5 240v-6 M473.5 138v5 M483.5 41v1 M483.5 240v-1 M483.5 138v5 M493.5 41v1 M493.5 240v-1 M493.5 138v5 M503.5 41v1 M503.5 240v-1 M503.5 138v5 M513.5 41v1 M513.5 240v-1 M513.5 138v5" stroke="#b4aa82" stroke-width="1" fill="none"/>
<polygon points="268,40 279,40 273.5,46" fill="#f07030"/>
<defs><clipPath id="gc"><rect x="23" y="40" width="501" height="201"/></clipPath></defs>
<g fill="none" stroke-linejoin="round" stroke-linecap="round" clip-path="url(#gc)">
<path d="M-19.0 223.0 C-17.0 223.5 -10.5 225.5 -7.0 226.0 C-3.5 226.5 -0.7 227.4 2.0 226.0 C4.7 224.6 6.9 221.7 9.4 217.5 C11.9 213.3 14.7 207.9 17.0 201.0 C19.3 194.1 21.0 183.0 23.0 176.0 C25.0 169.0 27.1 164.7 29.0 159.0 C30.9 153.3 33.0 146.2 34.7 142.0 C36.4 137.8 37.3 136.0 39.0 134.0 C40.7 132.0 43.0 130.4 45.0 130.0 C47.0 129.6 49.2 130.8 51.0 131.5 C52.8 132.2 53.5 133.0 56.0 134.0 C58.5 135.0 63.0 137.2 66.0 137.5 C69.0 137.8 71.3 136.6 74.0 136.0 C76.7 135.4 77.7 134.2 82.0 134.0 C86.3 133.8 94.8 135.0 100.0 135.0 C105.2 135.0 109.0 134.3 113.0 134.0 C117.0 133.7 121.2 132.8 124.0 133.0 C126.8 133.2 128.3 133.8 130.0 135.0 C131.7 136.2 132.5 136.7 134.0 140.0 C135.5 143.3 136.8 149.0 139.0 155.0 C141.2 161.0 144.4 169.0 147.0 176.0 C149.6 183.0 152.1 190.0 154.6 197.0 C157.1 204.0 160.1 213.2 162.0 218.0 C163.9 222.8 164.4 223.6 166.0 226.0 C167.6 228.4 169.5 231.7 171.5 232.5 C173.5 233.3 176.1 231.7 178.0 231.0 C179.9 230.3 180.3 229.9 183.0 228.6 C185.7 227.3 189.7 223.6 194.0 223.0 C198.3 222.4 202.8 225.0 209.0 225.0 C215.2 225.0 225.3 222.8 231.0 223.0 C236.7 223.2 239.5 225.5 243.0 226.0 C246.5 226.5 249.3 227.4 252.0 226.0 C254.7 224.6 256.9 221.7 259.4 217.5 C261.9 213.3 264.7 207.9 267.0 201.0 C269.3 194.1 271.0 183.0 273.0 176.0 C275.0 169.0 277.1 164.7 279.0 159.0 C280.9 153.3 283.0 146.2 284.7 142.0 C286.4 137.8 287.3 136.0 289.0 134.0 C290.7 132.0 293.0 130.4 295.0 130.0 C297.0 129.6 299.2 130.8 301.0 131.5 C302.8 132.2 303.5 133.0 306.0 134.0 C308.5 135.0 313.0 137.2 316.0 137.5 C319.0 137.8 321.3 136.6 324.0 136.0 C326.7 135.4 327.7 134.2 332.0 134.0 C336.3 133.8 344.8 135.0 350.0 135.0 C355.2 135.0 359.0 134.3 363.0 134.0 C367.0 133.7 371.2 132.8 374.0 133.0 C376.8 133.2 378.3 133.8 380.0 135.0 C381.7 136.2 382.5 136.7 384.0 140.0 C385.5 143.3 386.8 149.0 389.0 155.0 C391.2 161.0 394.4 169.0 397.0 176.0 C399.6 183.0 402.1 190.0 404.6 197.0 C407.1 204.0 410.1 213.2 412.0 218.0 C413.9 222.8 414.4 223.6 416.0 226.0 C417.6 228.4 419.5 231.7 421.5 232.5 C423.5 233.3 426.1 231.7 428.0 231.0 C429.9 230.3 430.3 229.9 433.0 228.6 C435.7 227.3 439.7 223.6 444.0 223.0 C448.3 222.4 452.8 225.0 459.0 225.0 C465.2 225.0 475.3 222.8 481.0 223.0 C486.7 223.2 489.5 225.5 493.0 226.0 C496.5 226.5 499.3 227.4 502.0 226.0 C504.7 224.6 506.9 221.7 509.4 217.5 C511.9 213.3 514.7 207.9 517.0 201.0 C519.3 194.1 521.0 183.0 523.0 176.0 C525.0 169.0 527.0 164.7 529.0 159.0 C531.0 153.3 533.0 146.2 534.7 142.0 C536.4 137.8 537.3 136.0 539.0 134.0 C540.7 132.0 543.0 130.4 545.0 130.0 C547.0 129.6 549.2 130.8 551.0 131.5 C552.8 132.2 555.2 133.6 556.0 134.0" stroke="#ffff00" stroke-width="1.7"/>
<path d="M-19.0 223.0 C-17.0 223.5 -10.5 225.5 -7.0 226.0 C-3.5 226.5 -0.7 227.4 2.0 226.0 C4.7 224.6 6.9 221.7 9.4 217.5 C11.9 213.3 14.7 207.9 17.0 201.0 C19.3 194.1 21.0 183.0 23.0 176.0 C25.0 169.0 27.1 164.7 29.0 159.0 C30.9 153.3 33.0 146.2 34.7 142.0 C36.4 137.8 37.3 136.0 39.0 134.0 C40.7 132.0 43.0 130.4 45.0 130.0 C47.0 129.6 49.2 130.8 51.0 131.5 C52.8 132.2 53.5 133.0 56.0 134.0 C58.5 135.0 63.0 137.2 66.0 137.5 C69.0 137.8 71.3 136.6 74.0 136.0 C76.7 135.4 77.7 134.2 82.0 134.0 C86.3 133.8 94.8 135.0 100.0 135.0 C105.2 135.0 109.0 134.3 113.0 134.0 C117.0 133.7 121.2 132.8 124.0 133.0 C126.8 133.2 128.3 133.8 130.0 135.0 C131.7 136.2 132.5 136.7 134.0 140.0 C135.5 143.3 136.8 149.0 139.0 155.0 C141.2 161.0 144.4 169.0 147.0 176.0 C149.6 183.0 152.1 190.0 154.6 197.0 C157.1 204.0 160.1 213.2 162.0 218.0 C163.9 222.8 164.4 223.6 166.0 226.0 C167.6 228.4 169.5 231.7 171.5 232.5 C173.5 233.3 176.1 231.7 178.0 231.0 C179.9 230.3 180.3 229.9 183.0 228.6 C185.7 227.3 189.7 223.6 194.0 223.0 C198.3 222.4 202.8 225.0 209.0 225.0 C215.2 225.0 225.3 222.8 231.0 223.0 C236.7 223.2 239.5 225.5 243.0 226.0 C246.5 226.5 249.3 227.4 252.0 226.0 C254.7 224.6 256.9 221.7 259.4 217.5 C261.9 213.3 264.7 207.9 267.0 201.0 C269.3 194.1 271.0 183.0 273.0 176.0 C275.0 169.0 277.1 164.7 279.0 159.0 C280.9 153.3 283.0 146.2 284.7 142.0 C286.4 137.8 287.3 136.0 289.0 134.0 C290.7 132.0 293.0 130.4 295.0 130.0 C297.0 129.6 299.2 130.8 301.0 131.5 C302.8 132.2 303.5 133.0 306.0 134.0 C308.5 135.0 313.0 137.2 316.0 137.5 C319.0 137.8 321.3 136.6 324.0 136.0 C326.7 135.4 327.7 134.2 332.0 134.0 C336.3 133.8 344.8 135.0 350.0 135.0 C355.2 135.0 359.0 134.3 363.0 134.0 C367.0 133.7 371.2 132.8 374.0 133.0 C376.8 133.2 378.3 133.8 380.0 135.0 C381.7 136.2 382.5 136.7 384.0 140.0 C385.5 143.3 386.8 149.0 389.0 155.0 C391.2 161.0 394.4 169.0 397.0 176.0 C399.6 183.0 402.1 190.0 404.6 197.0 C407.1 204.0 410.1 213.2 412.0 218.0 C413.9 222.8 414.4 223.6 416.0 226.0 C417.6 228.4 419.5 231.7 421.5 232.5 C423.5 233.3 426.1 231.7 428.0 231.0 C429.9 230.3 430.3 229.9 433.0 228.6 C435.7 227.3 439.7 223.6 444.0 223.0 C448.3 222.4 452.8 225.0 459.0 225.0 C465.2 225.0 475.3 222.8 481.0 223.0 C486.7 223.2 489.5 225.5 493.0 226.0 C496.5 226.5 499.3 227.4 502.0 226.0 C504.7 224.6 506.9 221.7 509.4 217.5 C511.9 213.3 514.7 207.9 517.0 201.0 C519.3 194.1 521.0 183.0 523.0 176.0 C525.0 169.0 527.0 164.7 529.0 159.0 C531.0 153.3 533.0 146.2 534.7 142.0 C536.4 137.8 537.3 136.0 539.0 134.0 C540.7 132.0 543.0 130.4 545.0 130.0 C547.0 129.6 549.2 130.8 551.0 131.5 C552.8 132.2 555.2 133.6 556.0 134.0" stroke="#ffff00" stroke-width="1.1" transform="translate(0.5 1.2)"/>
<path d="M-26.0 136.3 C-24.2 136.1 -19.5 136.4 -15.0 135.3 C-10.5 134.2 -2.5 130.1 1.0 129.6 C4.5 129.1 4.3 130.1 6.0 132.5 C7.7 134.9 9.2 140.1 11.0 144.0 C12.8 147.9 14.7 151.6 16.5 156.0 C18.3 160.4 20.5 167.2 21.6 170.5 C22.7 173.8 21.9 172.8 23.0 176.0 C24.1 179.2 26.3 185.3 28.0 190.0 C29.7 194.7 31.2 199.3 33.0 204.0 C34.8 208.7 37.2 214.4 39.0 218.0 C40.8 221.6 41.8 224.8 44.0 225.5 C46.2 226.2 49.2 223.3 52.5 222.0 C55.8 220.7 60.2 218.5 64.0 217.5 C67.8 216.5 71.9 216.4 75.0 216.0 C78.1 215.6 79.3 215.7 82.5 215.0 C85.7 214.3 90.3 212.5 94.4 212.0 C98.5 211.5 103.6 211.6 107.0 212.0 C110.4 212.4 111.9 213.3 114.7 214.5 C117.5 215.7 121.1 219.4 124.0 219.0 C126.9 218.6 129.2 216.0 132.0 212.0 C134.8 208.0 138.4 201.0 141.0 195.0 C143.6 189.0 145.5 182.2 147.5 176.0 C149.5 169.8 151.3 163.5 153.0 158.0 C154.7 152.5 156.1 147.2 157.5 143.0 C158.9 138.8 160.1 135.5 161.5 133.0 C162.9 130.5 164.4 129.2 166.0 128.0 C167.6 126.8 169.5 126.2 171.0 126.0 C172.5 125.8 173.4 125.9 175.0 126.5 C176.6 127.1 178.3 128.2 180.5 129.5 C182.7 130.8 184.2 133.4 188.0 134.0 C191.8 134.6 197.0 132.6 203.0 133.0 C209.0 133.4 218.7 135.9 224.0 136.3 C229.3 136.7 230.5 136.4 235.0 135.3 C239.5 134.2 247.5 130.1 251.0 129.6 C254.5 129.1 254.3 130.1 256.0 132.5 C257.7 134.9 259.2 140.1 261.0 144.0 C262.8 147.9 264.7 151.6 266.5 156.0 C268.3 160.4 270.5 167.2 271.6 170.5 C272.7 173.8 271.9 172.8 273.0 176.0 C274.1 179.2 276.3 185.3 278.0 190.0 C279.7 194.7 281.2 199.3 283.0 204.0 C284.8 208.7 287.2 214.4 289.0 218.0 C290.8 221.6 291.8 224.8 294.0 225.5 C296.2 226.2 299.2 223.3 302.5 222.0 C305.8 220.7 310.2 218.5 314.0 217.5 C317.8 216.5 321.9 216.4 325.0 216.0 C328.1 215.6 329.3 215.7 332.5 215.0 C335.7 214.3 340.3 212.5 344.4 212.0 C348.5 211.5 353.6 211.6 357.0 212.0 C360.4 212.4 361.9 213.3 364.7 214.5 C367.5 215.7 371.1 219.4 374.0 219.0 C376.9 218.6 379.2 216.0 382.0 212.0 C384.8 208.0 388.4 201.0 391.0 195.0 C393.6 189.0 395.5 182.2 397.5 176.0 C399.5 169.8 401.3 163.5 403.0 158.0 C404.7 152.5 406.1 147.2 407.5 143.0 C408.9 138.8 410.1 135.5 411.5 133.0 C412.9 130.5 414.4 129.2 416.0 128.0 C417.6 126.8 419.5 126.2 421.0 126.0 C422.5 125.8 423.4 125.9 425.0 126.5 C426.6 127.1 428.3 128.2 430.5 129.5 C432.7 130.8 434.2 133.4 438.0 134.0 C441.8 134.6 447.0 132.6 453.0 133.0 C459.0 133.4 468.7 135.9 474.0 136.3 C479.3 136.7 480.5 136.4 485.0 135.3 C489.5 134.2 497.5 130.1 501.0 129.6 C504.5 129.1 504.3 130.1 506.0 132.5 C507.7 134.9 509.2 140.1 511.0 144.0 C512.8 147.9 514.7 151.6 516.5 156.0 C518.3 160.4 520.5 167.2 521.6 170.5 C522.7 173.8 521.9 172.8 523.0 176.0 C524.1 179.2 526.3 185.3 528.0 190.0 C529.7 194.7 531.2 199.3 533.0 204.0 C534.8 208.7 537.2 214.4 539.0 218.0 C540.8 221.6 541.8 224.8 544.0 225.5 C546.2 226.2 551.1 222.6 552.5 222.0" stroke="#00ffff" stroke-width="1.7"/>
<path d="M-26.0 136.3 C-24.2 136.1 -19.5 136.4 -15.0 135.3 C-10.5 134.2 -2.5 130.1 1.0 129.6 C4.5 129.1 4.3 130.1 6.0 132.5 C7.7 134.9 9.2 140.1 11.0 144.0 C12.8 147.9 14.7 151.6 16.5 156.0 C18.3 160.4 20.5 167.2 21.6 170.5 C22.7 173.8 21.9 172.8 23.0 176.0 C24.1 179.2 26.3 185.3 28.0 190.0 C29.7 194.7 31.2 199.3 33.0 204.0 C34.8 208.7 37.2 214.4 39.0 218.0 C40.8 221.6 41.8 224.8 44.0 225.5 C46.2 226.2 49.2 223.3 52.5 222.0 C55.8 220.7 60.2 218.5 64.0 217.5 C67.8 216.5 71.9 216.4 75.0 216.0 C78.1 215.6 79.3 215.7 82.5 215.0 C85.7 214.3 90.3 212.5 94.4 212.0 C98.5 211.5 103.6 211.6 107.0 212.0 C110.4 212.4 111.9 213.3 114.7 214.5 C117.5 215.7 121.1 219.4 124.0 219.0 C126.9 218.6 129.2 216.0 132.0 212.0 C134.8 208.0 138.4 201.0 141.0 195.0 C143.6 189.0 145.5 182.2 147.5 176.0 C149.5 169.8 151.3 163.5 153.0 158.0 C154.7 152.5 156.1 147.2 157.5 143.0 C158.9 138.8 160.1 135.5 161.5 133.0 C162.9 130.5 164.4 129.2 166.0 128.0 C167.6 126.8 169.5 126.2 171.0 126.0 C172.5 125.8 173.4 125.9 175.0 126.5 C176.6 127.1 178.3 128.2 180.5 129.5 C182.7 130.8 184.2 133.4 188.0 134.0 C191.8 134.6 197.0 132.6 203.0 133.0 C209.0 133.4 218.7 135.9 224.0 136.3 C229.3 136.7 230.5 136.4 235.0 135.3 C239.5 134.2 247.5 130.1 251.0 129.6 C254.5 129.1 254.3 130.1 256.0 132.5 C257.7 134.9 259.2 140.1 261.0 144.0 C262.8 147.9 264.7 151.6 266.5 156.0 C268.3 160.4 270.5 167.2 271.6 170.5 C272.7 173.8 271.9 172.8 273.0 176.0 C274.1 179.2 276.3 185.3 278.0 190.0 C279.7 194.7 281.2 199.3 283.0 204.0 C284.8 208.7 287.2 214.4 289.0 218.0 C290.8 221.6 291.8 224.8 294.0 225.5 C296.2 226.2 299.2 223.3 302.5 222.0 C305.8 220.7 310.2 218.5 314.0 217.5 C317.8 216.5 321.9 216.4 325.0 216.0 C328.1 215.6 329.3 215.7 332.5 215.0 C335.7 214.3 340.3 212.5 344.4 212.0 C348.5 211.5 353.6 211.6 357.0 212.0 C360.4 212.4 361.9 213.3 364.7 214.5 C367.5 215.7 371.1 219.4 374.0 219.0 C376.9 218.6 379.2 216.0 382.0 212.0 C384.8 208.0 388.4 201.0 391.0 195.0 C393.6 189.0 395.5 182.2 397.5 176.0 C399.5 169.8 401.3 163.5 403.0 158.0 C404.7 152.5 406.1 147.2 407.5 143.0 C408.9 138.8 410.1 135.5 411.5 133.0 C412.9 130.5 414.4 129.2 416.0 128.0 C417.6 126.8 419.5 126.2 421.0 126.0 C422.5 125.8 423.4 125.9 425.0 126.5 C426.6 127.1 428.3 128.2 430.5 129.5 C432.7 130.8 434.2 133.4 438.0 134.0 C441.8 134.6 447.0 132.6 453.0 133.0 C459.0 133.4 468.7 135.9 474.0 136.3 C479.3 136.7 480.5 136.4 485.0 135.3 C489.5 134.2 497.5 130.1 501.0 129.6 C504.5 129.1 504.3 130.1 506.0 132.5 C507.7 134.9 509.2 140.1 511.0 144.0 C512.8 147.9 514.7 151.6 516.5 156.0 C518.3 160.4 520.5 167.2 521.6 170.5 C522.7 173.8 521.9 172.8 523.0 176.0 C524.1 179.2 526.3 185.3 528.0 190.0 C529.7 194.7 531.2 199.3 533.0 204.0 C534.8 208.7 537.2 214.4 539.0 218.0 C540.8 221.6 541.8 224.8 544.0 225.5 C546.2 226.2 551.1 222.6 552.5 222.0" stroke="#00ffff" stroke-width="1.1" transform="translate(0.5 1.2)"/>
</g>
<!-- right trigger arrow -->
<path d="M513 182.5h9.5" stroke="#ffff00" stroke-width="1.6"/><path d="M509.5 182.5l5 -4v8z" fill="#ffff00"/>
<!-- ch markers -->
<path d="M11.5 221v5M19 223l3 -2" stroke="#ffff00" stroke-width="1.2"/>
<rect x="2" y="207" width="21" height="14" fill="#00ffff"/>
<path d="M16 214.5h4" stroke="#000" stroke-width="1.2"/>
<path d="M19 211.5l4 3 -4 3z" fill="#000"/>
<text x="8.6" y="219.6" font-family="Liberation Sans" font-size="12.5" fill="#000" textLength="5" lengthAdjust="spacingAndGlyphs">2</text>
<!-- slope icon in readout -->
<path d="M362 222.5l5 -6.5h2" stroke="#fff" stroke-width="1.2" fill="none"/>
</svg>

<!-- Source tab control -->
<div class="a" style="left:16px;top:316px;width:104px;height:102px;background:#316aa3;border-style:solid;border-width:0 2px 2px 1px;border-color:#7ea6cf #000 #000 #7ea6cf"></div>
<div class="a" style="left:16px;top:294px;width:34px;height:23px;background:#316aa3;border-style:solid;border-width:1px 0 0 1px;border-color:#7ea6cf;border-top-left-radius:3px"></div>
<div class="a" style="left:50px;top:297px;width:1px;height:19px;background:#000"></div>
<div class="a" style="left:51px;top:294px;width:33px;height:22px;background:#7aa0c8;border-radius:4px 4px 0 0"></div>
<div class="a" style="left:84px;top:298px;width:1px;height:18px;background:#000"></div>
<div class="a" style="left:85px;top:294px;width:34px;height:22px;background:#7aa0c8;border-radius:4px 4px 0 0"></div>
<div class="a" style="left:119px;top:298px;width:1px;height:18px;background:#000"></div>
<!-- channel buttons -->
<div class="btnw" style="left:35px;top:341px;width:28px;height:27px;border-width:1px 0 0 1px;border-color:#000"></div>
<div class="btn" style="left:73px;top:341px;width:27px;height:27px;border-width:1px 1px 1px 1px"></div>
<div class="btn" style="left:35px;top:379px;width:27px;height:27px;border-width:1px 1px 1px 1px"></div>
<div class="btn" style="left:73px;top:379px;width:27px;height:27px;border-width:1px 1px 1px 1px"></div>
<svg class="a" style="left:0;top:0" width="640" height="480" viewBox="0 0 640 480">
<g stroke="#000" stroke-width="1.4" stroke-linejoin="round">
<path d="M44 346l3.8 3.8 -3.8 3.8 -3.8 -3.8z" fill="#f0f000"/>
<path d="M82 345l3.8 3.8 -3.8 3.8 -3.8 -3.8z" fill="#30c8f8"/>
<path d="M43 382.5l3.8 3.8 -3.8 3.8 -3.8 -3.8z" fill="#e040e0"/>
<path d="M82 382.5l3.8 3.8 -3.8 3.8 -3.8 -3.8z" fill="#10c010"/>
</g>
<g fill="#fff" opacity="0.8"><rect x="43" y="349" width="1.6" height="1.6"/><rect x="81" y="348" width="1.6" height="1.6"/><rect x="42" y="385.5" width="1.6" height="1.6"/><rect x="81" y="385.5" width="1.6" height="1.6"/></g>
<g font-family="Liberation Sans" font-size="13" fill="#000">
<text x="47.6" y="361.5">1</text><text x="86.2" y="360.5">2</text>
<text x="46.4" y="399">3</text><text x="85.4" y="399">4</text>
<rect x="49" y="361" width="6" height="1"/>
</g>
</svg>
<!-- Histogram Mode group -->
<div class="grp" style="left:130px;top:283px;width:86px;height:178px"></div>
<div class="a" style="left:137px;top:280px;width:72px;height:6px;background:#214d74"></div>
<div class="btn" style="left:150px;top:319px;width:45px;height:27px"></div>
<div class="btn" style="left:150px;top:363px;width:45px;height:27px"></div>
<div class="btnw" style="left:150px;top:407px;width:45px;height:27px"></div>
<svg class="a" style="left:0;top:0" width="640" height="480" viewBox="0 0 640 480">
<path d="M166.5 323h9.5l-3 5 -1.5 7h-1l-1.5 -7z" fill="#000"/>
<path d="M158 341.5h12l4 -6h12" stroke="#000080" stroke-width="1.3" fill="none"/>
<path d="M170.5 340.5l4 -5" stroke="#00ffff" stroke-width="1.2"/>
<path d="M157 373v9l6 -3.5h6v-1.5h-6z" fill="#000"/>
<path d="M171 377.5h15" stroke="#000080" stroke-width="1.3"/>
<path d="M173 376h3l1 -2 1 3h3l1 -3 1 4h2" stroke="#00ffff" stroke-width="1" fill="none"/>
<path d="M173 379h4l1 2 1 -2h5" stroke="#00ffff" stroke-width="1" fill="none"/>
</svg>
<!-- Histogram Scaling group -->
<div class="grp" style="left:229px;top:283px;width:78px;height:124px"></div>
<div class="a" style="left:232px;top:280px;width:70px;height:6px;background:#214d74"></div>
<div class="btnw" style="left:245px;top:319px;width:45px;height:26px"></div>
<div class="btn" style="left:245px;top:363px;width:45px;height:27px"></div>
<div class="fld" style="left:229px;top:436px;width:70px;height:20px"></div>
<!-- histogram display -->
<div class="a" style="left:324px;top:255px;width:104px;height:87px;background:#fff;border-style:solid;border-width:1px 2px 2px 1px;border-color:#000 #7ea6cf #7ea6cf #000;box-shadow:inset 1px 1px 0 #c8c6c8"></div>
<svg class="a" style="left:0;top:0" width="640" height="480" viewBox="0 0 640 480">
<path d="M347 273h1v1H347zM349 273h1v1H349zM327 274h1v1H327zM329 274h1v1H329zM331 274h2v1H331zM335 274h1v1H335zM342 274h1v1H342zM345 274h3v1H345zM349 274h2v1H349zM326 275h3v1H326zM330 275h5v1H330zM337 275h3v1H337zM342 275h1v1H342zM344 275h7v1H344zM352 275h1v1H352zM326 276h4v1H326zM331 276h5v1H331zM337 276h17v1H337zM326 277h1v1H326zM329 277h11v1H329zM341 277h5v1H341zM347 277h11v1H347zM359 277h1v1H359zM326 278h13v1H326zM340 278h9v1H340zM350 278h5v1H350zM356 278h3v1H356zM360 278h1v1H360zM326 279h6v1H326zM333 279h12v1H333zM346 279h1v1H346zM350 279h6v1H350zM357 279h2v1H357zM326 280h2v1H326zM329 280h7v1H329zM337 280h2v1H337zM340 280h4v1H340zM345 280h3v1H345zM349 280h5v1H349zM355 280h2v1H355zM358 280h1v1H358zM326 281h7v1H326zM334 281h3v1H334zM338 281h1v1H338zM340 281h20v1H340zM326 282h2v1H326zM329 282h1v1H329zM331 282h2v1H331zM334 282h3v1H334zM341 282h2v1H341zM345 282h8v1H345zM354 282h4v1H354zM360 282h1v1H360zM326 283h1v1H326zM329 283h1v1H329zM333 283h1v1H333zM336 283h1v1H336zM339 283h1v1H339zM343 283h1v1H343zM347 283h1v1H347zM349 283h1v1H349zM351 283h3v1H351zM355 283h3v1H355zM359 283h4v1H359zM351 284h1v1H351zM354 284h8v1H354zM353 285h9v1H353zM354 286h9v1H354zM364 286h1v1H364zM355 287h6v1H355zM362 287h1v1H362zM355 288h9v1H355zM356 289h6v1H356zM364 289h1v1H364zM356 290h11v1H356zM357 291h8v1H357zM357 292h1v1H357zM359 292h5v1H359zM358 293h7v1H358zM358 294h8v1H358zM357 295h1v1H357zM359 295h8v1H359zM359 296h2v1H359zM362 296h5v1H362zM358 297h9v1H358zM359 298h5v1H359zM365 298h1v1H365zM368 298h1v1H368zM362 299h3v1H362zM366 299h3v1H366zM360 300h3v1H360zM364 300h2v1H364zM367 300h3v1H367zM360 301h8v1H360zM369 301h1v1H369zM363 302h3v1H363zM367 302h3v1H367zM360 303h4v1H360zM365 303h5v1H365zM365 304h5v1H365zM362 305h2v1H362zM365 305h5v1H365zM362 306h6v1H362zM369 306h2v1H369zM363 307h8v1H363zM363 308h6v1H363zM370 308h2v1H370zM363 309h5v1H363zM369 309h4v1H369zM365 310h4v1H365zM370 310h1v1H370zM363 311h4v1H363zM368 311h6v1H368zM364 312h1v1H364zM366 312h8v1H366zM365 313h6v1H365zM372 313h1v1H372zM374 313h1v1H374zM366 314h8v1H366zM376 314h1v1H376zM367 315h5v1H367zM373 315h3v1H373zM366 316h5v1H366zM372 316h3v1H372zM376 316h3v1H376zM368 317h2v1H368zM371 317h10v1H371zM382 317h1v1H382zM389 317h1v1H389zM393 317h1v1H393zM396 317h1v1H396zM400 317h3v1H400zM415 317h1v1H415zM420 317h1v1H420zM368 318h1v1H368zM370 318h18v1H370zM391 318h4v1H391zM396 318h3v1H396zM404 318h1v1H404zM406 318h3v1H406zM410 318h4v1H410zM415 318h3v1H415zM419 318h2v1H419zM424 318h2v1H424zM369 319h4v1H369zM374 319h1v1H374zM376 319h5v1H376zM382 319h30v1H382zM413 319h5v1H413zM419 319h5v1H419zM425 319h2v1H425zM370 320h5v1H370zM376 320h7v1H376zM384 320h3v1H384zM388 320h2v1H388zM392 320h2v1H392zM395 320h1v1H395zM397 320h16v1H397zM414 320h13v1H414zM370 321h26v1H370zM397 321h2v1H397zM400 321h3v1H400zM404 321h1v1H404zM407 321h2v1H407zM410 321h4v1H410zM415 321h4v1H415zM420 321h7v1H420zM373 322h9v1H373zM383 322h1v1H383zM385 322h4v1H385zM390 322h10v1H390zM401 322h9v1H401zM411 322h15v1H411zM372 323h2v1H372zM377 323h8v1H377zM386 323h2v1H386zM389 323h8v1H389zM398 323h10v1H398zM409 323h18v1H409zM377 324h1v1H377zM380 324h1v1H380zM382 324h4v1H382zM387 324h2v1H387zM390 324h2v1H390zM393 324h3v1H393zM397 324h11v1H397zM409 324h3v1H409zM413 324h13v1H413zM377 325h1v1H377zM381 325h4v1H381zM390 325h3v1H390zM394 325h6v1H394zM401 325h2v1H401zM404 325h1v1H404zM407 325h3v1H407zM411 325h1v1H411zM413 325h2v1H413zM416 325h1v1H416zM418 325h3v1H418zM423 325h3v1H423zM381 326h1v1H381zM391 326h1v1H391zM393 326h1v1H393zM402 326h1v1H402zM404 326h1v1H404zM419 326h1v1H419zM423 326h1v1H423z" fill="#00ff00"/>
</svg>
<!-- limits fields -->
<div class="fld" style="left:337px;top:382px;width:70px;height:20px"></div>
<div class="fld" style="left:337px;top:436px;width:70px;height:20px"></div>
<div class="fld" style="left:461px;top:280px;width:70px;height:20px"></div>
<div class="fld" style="left:461px;top:336px;width:70px;height:20px"></div>
<!-- Adjust group -->
<div class="grp" style="left:433px;top:392px;width:128px;height:77px"></div>
<div class="a" style="left:475px;top:389px;width:44px;height:6px;background:#214d74"></div>
<div class="btnw" style="left:446px;top:429px;width:45px;height:27px"></div>
<div class="btn" style="left:502px;top:429px;width:46px;height:27px"></div>
<!-- right column -->
<div class="btnw" style="left:574px;top:294px;width:45px;height:27px"></div>
<div class="btn" style="left:574px;top:355px;width:45px;height:27px"></div>
<div class="bbtn" style="left:573px;top:396px;width:45px;height:27px"></div>
<div class="bbtn" style="left:573px;top:438px;width:45px;height:27px"></div>

<div class="a" style="left:8px;top:17px;width:6px;height:1px;background:#000"></div>
<div class="a" style="left:40px;top:17px;width:7px;height:1px;background:#000"></div>
<div class="a" style="left:73px;top:17px;width:7px;height:1px;background:#000"></div>
<div class="a" style="left:130px;top:17px;width:6px;height:1px;background:#000"></div>
<div class="a" style="left:184px;top:17px;width:6px;height:1px;background:#000"></div>
<div class="a" style="left:216px;top:17px;width:7px;height:1px;background:#000"></div>
<div class="a" style="left:262px;top:17px;width:8px;height:1px;background:#000"></div>
<div class="a" style="left:335px;top:17px;width:5px;height:1px;background:#000"></div>
<div class="a" style="left:379px;top:17px;width:6px;height:1px;background:#000"></div>
<div class="a" style="left:414px;top:17px;width:9px;height:1px;background:#000"></div>
<div class="a" style="left:459px;top:17px;width:5px;height:1px;background:#000"></div>
<div class="a" style="left:506px;top:17px;width:8px;height:1px;background:#000"></div>
<div class="a" style="left:555px;top:17px;width:7px;height:1px;background:#000"></div>
<div class=t style="left:8.40px;top:7.22px;font-size:11.5px;color:#000;transform:scaleX(0.8635);">File</div>
<div class=t style="left:39.80px;top:7.22px;font-size:11.5px;color:#000;transform:scaleX(0.8781);">Edit</div>
<div class=t style="left:73.20px;top:7.22px;font-size:11.5px;color:#000;transform:scaleX(0.9042);">Vertical</div>
<div class=t style="left:122.00px;top:7.22px;font-size:11.5px;color:#000;transform:scaleX(0.9309);">Horiz/Acq</div>
<div class=t style="left:183.90px;top:7.22px;font-size:11.5px;color:#000;transform:scaleX(0.8824);">Trig</div>
<div class=t style="left:216.50px;top:7.22px;font-size:11.5px;color:#000;transform:scaleX(0.8937);">Display</div>
<div class=t style="left:262.20px;top:7.22px;font-size:11.5px;color:#000;transform:scaleX(0.9142);">Cursors</div>
<div class=t style="left:314.40px;top:7.22px;font-size:11.5px;color:#000;transform:scaleX(0.9074);">Measure</div>
<div class=t style="left:370.40px;top:7.22px;font-size:11.5px;color:#000;transform:scaleX(0.8608);">Masks</div>
<div class=t style="left:414.40px;top:7.22px;font-size:11.5px;color:#000;transform:scaleX(0.9231);">Math</div>
<div class=t style="left:450.50px;top:7.22px;font-size:11.5px;color:#000;transform:scaleX(0.8866);">MyScope</div>
<div class=t style="left:505.50px;top:7.22px;font-size:11.5px;color:#000;transform:scaleX(0.9147);">Utilities</div>
<div class=t style="left:554.70px;top:7.22px;font-size:11.5px;color:#000;transform:scaleX(0.8794);">Help</div>
<div class=t style="left:2.00px;top:27.62px;font-size:11.5px;color:#fff;transform:scaleX(1.0226);">Tek</div>
<div class=t style="left:40.80px;top:27.38px;font-size:12.5px;color:#d4d4d4;transform:scaleX(0.7632);">Run</div>
<div class=t style="left:90.40px;top:27.38px;font-size:12.5px;color:#d4d4d4;transform:scaleX(0.7928);">Sample</div>
<div class=t style="left:199.70px;top:27.38px;font-size:12.5px;color:#d4d4d4;transform:scaleX(0.8331);">42062 Acqs</div>
<div class=t style="left:400.30px;top:27.38px;font-size:12.5px;color:#d4d4d4;transform:scaleX(0.8575);">24 Jul 20 19:49:32</div>
<div class=t style="left:595.50px;top:35.65px;font-size:11px;color:#000;transform:scaleX(0.9517);">Buttons</div>
<div class=t style="left:23.75px;top:176.22px;font-size:11.5px;color:#ffff00;transform:scaleX(0.8633);-webkit-text-stroke:0.25px currentColor;">Period(C1)</div>
<div class=t style="left:93.75px;top:176.22px;font-size:11.5px;color:#ffff00;transform:scaleX(0.8858);-webkit-text-stroke:0.25px currentColor;">20.06ns</div>
<div class=t style="left:164.80px;top:176.22px;font-size:11.5px;color:#ffff00;transform:scaleX(0.8757);-webkit-text-stroke:0.25px currentColor;">μ:</div>
<div class=t style="left:179.70px;top:176.22px;font-size:11.5px;color:#ffff00;transform:scaleX(0.9135);-webkit-text-stroke:0.25px currentColor;">19.996499n</div>
<div class=t style="left:248.50px;top:176.22px;font-size:11.5px;color:#ffff00;transform:scaleX(0.9237);-webkit-text-stroke:0.25px currentColor;">m:</div>
<div class=t style="left:263.40px;top:176.22px;font-size:11.5px;color:#ffff00;transform:scaleX(0.9174);-webkit-text-stroke:0.25px currentColor;">9.84n</div>
<div class=t style="left:312.20px;top:176.22px;font-size:11.5px;color:#ffff00;transform:scaleX(0.8689);-webkit-text-stroke:0.25px currentColor;">M:</div>
<div class=t style="left:326.40px;top:176.22px;font-size:11.5px;color:#ffff00;transform:scaleX(0.9174);-webkit-text-stroke:0.25px currentColor;">20.1n</div>
<div class=t style="left:379.10px;top:176.22px;font-size:11.5px;color:#ffff00;transform:scaleX(0.9910);-webkit-text-stroke:0.25px currentColor;">σ:</div>
<div class=t style="left:394.00px;top:176.22px;font-size:11.5px;color:#ffff00;transform:scaleX(0.9069);-webkit-text-stroke:0.25px currentColor;">30.29p</div>
<div class=t style="left:444.20px;top:176.22px;font-size:11.5px;color:#ffff00;transform:scaleX(0.9488);-webkit-text-stroke:0.25px currentColor;">n:</div>
<div class=t style="left:459.40px;top:176.22px;font-size:11.5px;color:#ffff00;transform:scaleX(0.8833);-webkit-text-stroke:0.25px currentColor;">42.05k</div>
<div class=t style="left:23.75px;top:189.22px;font-size:11.5px;color:#ffff00;transform:scaleX(0.8542);-webkit-text-stroke:0.25px currentColor;">Rise(C1)</div>
<div class=t style="left:95.00px;top:189.22px;font-size:11.5px;color:#ffff00;transform:scaleX(0.8689);-webkit-text-stroke:0.25px currentColor;">1.85ns</div>
<div class=t style="left:164.80px;top:189.22px;font-size:11.5px;color:#ffff00;transform:scaleX(0.8757);-webkit-text-stroke:0.25px currentColor;">μ:</div>
<div class=t style="left:179.70px;top:189.22px;font-size:11.5px;color:#ffff00;transform:scaleX(0.9135);-webkit-text-stroke:0.25px currentColor;">1.9071445n</div>
<div class=t style="left:248.50px;top:189.22px;font-size:11.5px;color:#ffff00;transform:scaleX(0.9237);-webkit-text-stroke:0.25px currentColor;">m:</div>
<div class=t style="left:264.00px;top:189.22px;font-size:11.5px;color:#ffff00;transform:scaleX(0.9069);-webkit-text-stroke:0.25px currentColor;">1.755n</div>
<div class=t style="left:312.20px;top:189.22px;font-size:11.5px;color:#ffff00;transform:scaleX(0.8689);-webkit-text-stroke:0.25px currentColor;">M:</div>
<div class=t style="left:326.40px;top:189.22px;font-size:11.5px;color:#ffff00;transform:scaleX(0.9240);-webkit-text-stroke:0.25px currentColor;">3.568n</div>
<div class=t style="left:379.10px;top:189.22px;font-size:11.5px;color:#ffff00;transform:scaleX(0.9910);-webkit-text-stroke:0.25px currentColor;">σ:</div>
<div class=t style="left:394.00px;top:189.22px;font-size:11.5px;color:#ffff00;transform:scaleX(0.9069);-webkit-text-stroke:0.25px currentColor;">58.01p</div>
<div class=t style="left:444.20px;top:189.22px;font-size:11.5px;color:#ffff00;transform:scaleX(0.9488);-webkit-text-stroke:0.25px currentColor;">n:</div>
<div class=t style="left:459.40px;top:189.22px;font-size:11.5px;color:#ffff00;transform:scaleX(0.8833);-webkit-text-stroke:0.25px currentColor;">42.05k</div>
<div class=t style="left:23.75px;top:202.22px;font-size:11.5px;color:#ffff00;transform:scaleX(0.7703);-webkit-text-stroke:0.25px currentColor;">Ch1</div>
<div class=t style="left:65.00px;top:202.22px;font-size:11.5px;color:#ffff00;transform:scaleX(0.7926);-webkit-text-stroke:0.25px currentColor;">1.0V</div>
<div class=t style="left:173.40px;top:202.22px;font-size:11.5px;color:#00ffff;transform:scaleX(0.8343);-webkit-text-stroke:0.25px currentColor;">Ch2</div>
<div class=t style="left:214.90px;top:202.22px;font-size:11.5px;color:#00ffff;transform:scaleX(0.7989);-webkit-text-stroke:0.25px currentColor;">1.0V</div>
<div class=t style="left:323.10px;top:202.22px;font-size:11.5px;color:#ffffff;transform:scaleX(0.8990);-webkit-text-stroke:0.25px currentColor;">M 4.0ns 2.5GS/s</div>
<div class=t style="left:423.75px;top:202.22px;font-size:11.5px;color:#ffffff;transform:scaleX(0.8972);-webkit-text-stroke:0.25px currentColor;">IT 8.0ps/pt</div>
<div class=t style="left:323.00px;top:214.22px;font-size:11.5px;color:#ffffff;transform:scaleX(0.8344);-webkit-text-stroke:0.25px currentColor;">A</div>
<div class=t style="left:335.30px;top:214.22px;font-size:11.5px;color:#ffff00;transform:scaleX(0.8153);-webkit-text-stroke:0.25px currentColor;">Ch1</div>
<div class=t style="left:376.00px;top:214.22px;font-size:11.5px;color:#ffffff;transform:scaleX(0.8053);-webkit-text-stroke:0.25px currentColor;">1.52V</div>
<div class=t style="left:10.00px;top:252.95px;font-size:13px;font-weight:bold;color:#fff;transform:scaleX(0.9903);">Waveform Histogram</div>
<div class=t style="left:44.70px;top:278.95px;font-size:13px;font-weight:bold;color:#fff;transform:scaleX(0.9689);">Source</div>
<div class=t style="left:25.75px;top:300.23px;font-size:11.5px;color:#fff;">Ch</div>
<div class=t style="left:53.75px;top:300.23px;font-size:11.5px;color:#fff;">Math</div>
<div class=t style="left:92.50px;top:300.23px;font-size:11.5px;color:#fff;transform:scaleX(0.9779);">Ref</div>
<div class=t style="left:42.00px;top:323.80px;font-size:12px;color:#fff;transform:scaleX(1.0291);">Channel</div>
<div class=t style="left:141.90px;top:277.38px;font-size:12.5px;font-weight:bold;color:#fff;">Histogram</div>
<div class=t style="left:156.90px;top:293.38px;font-size:12.5px;font-weight:bold;color:#fff;transform:scaleX(0.9805);">Mode</div>
<div class=t style="left:159.70px;top:307.23px;font-size:11.5px;color:#fff;transform:scaleX(0.8757);">Horiz</div>
<div class=t style="left:163.20px;top:351.23px;font-size:11.5px;color:#fff;transform:scaleX(0.8310);">Vert</div>
<div class=t style="left:165.80px;top:395.23px;font-size:11.5px;color:#fff;transform:scaleX(0.7404);">Off</div>
<div class=t style="left:235.80px;top:277.38px;font-size:12.5px;font-weight:bold;color:#fff;transform:scaleX(1.0111);">Histogram</div>
<div class=t style="left:243.70px;top:292.88px;font-size:12.5px;font-weight:bold;color:#fff;transform:scaleX(1.0234);">Scaling</div>
<div class=t style="left:252.50px;top:307.23px;font-size:11.5px;color:#fff;transform:scaleX(0.8352);">Linear</div>
<div class=t style="left:258.90px;top:351.73px;font-size:11.5px;color:#fff;transform:scaleX(0.8391);">Log</div>
<div class=t style="left:232.75px;top:420.38px;font-size:12.5px;font-weight:bold;color:#fff;transform:scaleX(1.0254);">Histo Size</div>
<div class=t style="left:247.50px;top:439.80px;font-size:12px;color:#fff;transform:scaleX(0.8548);">2.0divs</div>
<div class=t style="left:347.30px;top:287.30px;font-size:12px;color:#000;transform:scaleX(0.9693);">Histogram</div>
<div class=t style="left:345.80px;top:299.30px;font-size:12px;color:#000;">Mode is Off</div>
<div class=t style="left:342.90px;top:366.38px;font-size:12.5px;font-weight:bold;color:#fff;transform:scaleX(1.0188);">Left Limit</div>
<div class=t style="left:356.00px;top:385.80px;font-size:12px;color:#fff;transform:scaleX(0.8995);">-8.0ns</div>
<div class=t style="left:337.60px;top:420.38px;font-size:12.5px;font-weight:bold;color:#fff;transform:scaleX(1.0373);">Right Limit</div>
<div class=t style="left:360.00px;top:439.80px;font-size:12px;color:#fff;transform:scaleX(0.8176);">8.0ns</div>
<div class=t style="left:467.50px;top:264.38px;font-size:12.5px;font-weight:bold;color:#fff;transform:scaleX(1.0414);">Top Limit</div>
<div class=t style="left:480.00px;top:283.80px;font-size:12px;color:#fff;transform:scaleX(0.8677);">5.192V</div>
<div class=t style="left:459.50px;top:320.38px;font-size:12.5px;font-weight:bold;color:#fff;transform:scaleX(1.0370);">Bottom Lim</div>
<div class=t style="left:480.00px;top:339.80px;font-size:12px;color:#fff;transform:scaleX(0.8677);">1.184V</div>
<div class=t style="left:478.00px;top:387.38px;font-size:12.5px;font-weight:bold;color:#fff;transform:scaleX(0.9875);">Adjust</div>
<div class=t style="left:451.70px;top:402.98px;font-size:12.5px;font-weight:bold;color:#fff;transform:scaleX(1.0236);">Histogram Box</div>
<div class=t style="left:453.40px;top:417.23px;font-size:11.5px;color:#fff;transform:scaleX(0.9124);">Limits</div>
<div class=t style="left:505.50px;top:417.23px;font-size:11.5px;color:#fff;transform:scaleX(0.8901);">Location</div>
<div class=t style="left:573.75px;top:271.88px;font-size:12.5px;font-weight:bold;color:#fff;transform:scaleX(1.0121);">Display</div>
<div class=t style="left:589.50px;top:303.10px;font-size:12px;color:#000;transform:scaleX(0.7809);">On</div>
<div class=t style="left:580.00px;top:333.38px;font-size:12.5px;font-weight:bold;color:#fff;transform:scaleX(0.9546);">Reset</div>
<div class=t style="left:580.80px;top:404.30px;font-size:12px;color:#fff;transform:scaleX(0.8132);">Setup</div>
<div class=t style="left:581.70px;top:445.80px;font-size:12px;color:#fff;transform:scaleX(0.8018);">Close</div>
</body></html>
